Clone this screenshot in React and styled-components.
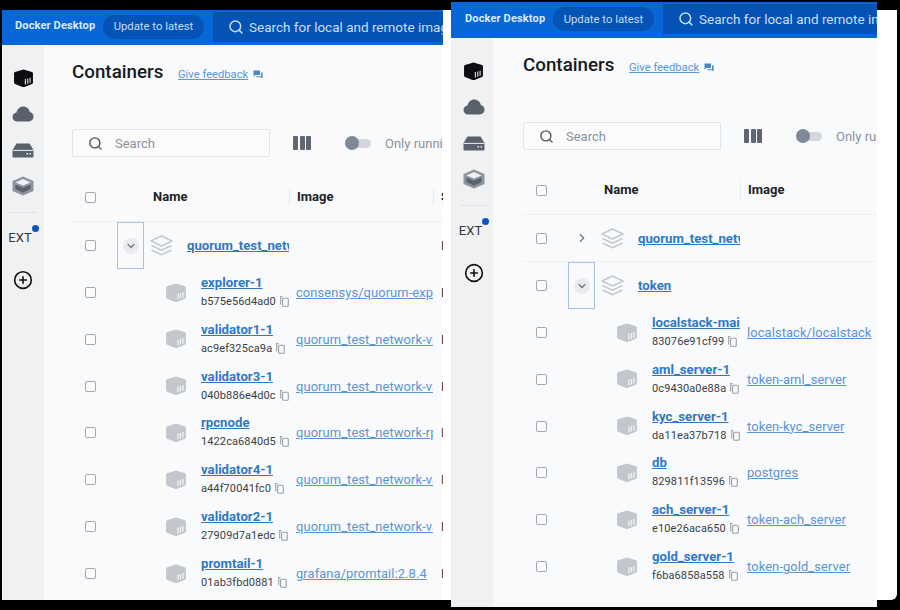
import React from 'react';
import styled, { createGlobalStyle } from 'styled-components';
import { Search, CirclePlus, ChevronDown, ChevronRight } from 'lucide-react';

const GlobalStyle = createGlobalStyle`
  html, body { margin: 0; padding: 0; background: #000; }
  body { font-family: Roboto, "Liberation Sans", sans-serif; }
`;

const Page = styled.div`
  width: 900px;
  height: 610px;
  padding: 10px 3px 10px 2px;
  box-sizing: border-box;
  background: #000;
  overflow: hidden;
`;

const Sheet = styled.div`
  display: flex;
  height: 590px;
  gap: 8px;
  padding-right: 20px;
  background: #fff;
  border-radius: 3px 0 6px 5px;
`;

const Win = styled.div`
  display: flex;
  flex-direction: column;
  width: ${p => p.$width}px;
  flex: none;
  height: ${p => p.$height}px;
  margin-top: ${p => p.$top}px;
  overflow: hidden;
  background: #f9fafb;
`;

const TopBar = styled.div`
  display: flex;
  align-items: center;
  flex: none;
  height: ${p => p.$height}px;
  box-sizing: border-box;
  padding: 0 0 2px ${p => p.$inset}px;
  background: #0767d6;
  color: #fff;
`;

const Brand = styled.div`
  width: 88px;
  flex: none;
  margin-top: -2px;
  font-size: 11px;
  font-weight: 700;
  color: #d9ebfb;
  letter-spacing: 0.15px;
`;

const UpdatePill = styled.div`
  width: 101px;
  height: 24px;
  flex: none;
  display: flex;
  align-items: center;
  justify-content: center;
  border-radius: 12px;
  background: #0553b6;
  color: #c4dcf5;
  font-size: 11.3px;
`;

const GlobalSearch = styled.div`
  display: flex;
  align-items: center;
  gap: 5px;
  flex: none;
  width: 300px;
  height: 30px;
  margin-left: 9px;
  padding-left: 15px;
  background: #0452b4;
  color: #c9dff6;
  font-size: 13.5px;
  white-space: nowrap;
`;

const Body = styled.div`
  display: flex;
  flex: 1;
  min-height: 0;
`;

const Sidebar = styled.div`
  width: 42px;
  flex: none;
  box-sizing: border-box;
  display: flex;
  flex-direction: column;
  align-items: center;
  padding-top: 15px;
  padding-left: ${p => p.$shift}px;
  background: #f0f1f3;
`;

const SideIcon = styled.div`
  height: 36px;
  display: flex;
  align-items: center;
  justify-content: center;
`;

const SideRule = styled.div`
  width: 28px;
  height: 1px;
  margin-top: 8px;
  background: #e0e2e5;
`;

const Ext = styled.div`
  position: relative;
  margin: 17px 0 0 -6px;
  font-size: 13px;
  color: #33373c;
  line-height: 16px;
`;

const ExtDot = styled.span`
  position: absolute;
  top: -5px;
  right: -7px;
  width: 7px;
  height: 7px;
  border-radius: 50%;
  background: #0b55b8;
`;

const PlusWrap = styled.div`
  margin-top: 24px;
  height: 20px;
  color: #111;
`;

const Main = styled.div`
  flex: 1;
  min-width: 0;
  overflow: hidden;
  padding: 15px 0 0 ${p => p.$inset}px;
`;

const TitleRow = styled.div`
  display: flex;
  align-items: center;
  height: 24px;
`;

const Title = styled.div`
  font-size: 18.8px;
  font-weight: 500;
  color: #17191c;
  width: 106px;
  flex: none;
`;

const Feedback = styled.a`
  display: flex;
  align-items: center;
  gap: 5px;
  font-size: 11.2px;
  color: #5b96d6;
  margin-top: 4px;
  span { text-decoration: underline; }
`;

const Toolbar = styled.div`
  display: flex;
  align-items: center;
  height: 28px;
  margin-top: 45px;
  width: 500px;
`;

const SearchBox = styled.div`
  display: flex;
  align-items: center;
  gap: 12px;
  width: 198px;
  height: 28px;
  flex: none;
  box-sizing: border-box;
  padding-left: 15px;
  border: 1px solid #e3e6ea;
  border-radius: 2px;
  background: #fbfbfc;
  color: #8b929b;
  font-size: 13px;
`;

const ColumnBars = styled.div`
  display: flex;
  gap: 1.5px;
  margin-left: 23px;
  width: 18px;
  height: 14px;
  flex: none;
  i { flex: 1; background: #5f6771; border-radius: 1px; }
`;

const Toggle = styled.div`
  position: relative;
  width: 26px;
  height: 9px;
  margin-left: 34px;
  flex: none;
  border-radius: 5px;
  background: #d3d7dd;
  &::before {
    content: '';
    position: absolute;
    left: 0;
    top: -2.5px;
    width: 14px;
    height: 14px;
    border-radius: 50%;
    background: #7f8896;
  }
`;

const ToggleLabel = styled.div`
  margin-left: 14px;
  font-size: 13px;
  color: #8b929b;
  white-space: nowrap;
`;

const Table = styled.div`
  margin-top: 17px;
`;

const Row = styled.div`
  display: grid;
  grid-template-columns: 45px 172px 144px minmax(0, 1fr);
  align-items: center;
  height: ${p => (p.$head ? 48 : p.$child ? 46.85 : 47)}px;
  box-sizing: ${p => (p.$line ? 'border-box' : 'content-box')};
  border-bottom: ${p => (p.$line ? '1px solid #eef0f2' : 'none')};
`;

const Box = styled.span`
  display: block;
  width: 11px;
  height: 11px;
  margin-left: 13px;
  box-sizing: border-box;
  border: 1.5px solid #a3a8af;
  border-radius: 2px;
  background: #fcfcfd;
`;

const HeadCell = styled.div`
  height: 16px;
  margin-bottom: 2px;
  display: flex;
  align-items: center;
  font-size: 13px;
  font-weight: 700;
  color: #202226;
  padding-left: ${p => (p.$first ? 36 : 7)}px;
  border-left: ${p => (p.$first ? 'none' : '1px solid #e8eaed')};
  box-sizing: border-box;
  white-space: nowrap;
  overflow: hidden;
`;

const NameCell = styled.div`
  display: flex;
  align-items: center;
  height: 100%;
  overflow: hidden;
  padding-left: ${p => (p.$child ? 48 : 0)}px;
`;

const Chevron = styled.div`
  width: 27px;
  height: 47px;
  flex: none;
  display: flex;
  align-items: center;
  justify-content: center;
  box-sizing: border-box;
  margin-right: 6px;
  border: 1px solid ${p => (p.$open ? '#a5c3e4' : 'transparent')};
  color: #6f7680;
`;

const ChevronDisc = styled.span`
  display: flex;
  align-items: center;
  justify-content: center;
  width: 16px;
  height: 16px;
  border-radius: 50%;
  background: #e9ebee;
`;

const GroupName = styled.a`
  margin-left: 14px;
  font-size: 13.2px;
  font-weight: 700;
  color: #2f78c4;
  text-decoration: underline;
  white-space: nowrap;
`;

const ChildText = styled.div`
  margin: 0 0 2px 14px;
  white-space: nowrap;
`;

const ChildName = styled.a`
  display: block;
  font-size: 13.2px;
  font-weight: 700;
  line-height: 17px;
  color: #2f78c4;
  text-decoration: underline;
`;

const IdLine = styled.div`
  display: flex;
  align-items: center;
  gap: 4px;
  margin-top: 3px;
  font-size: 11px;
  line-height: 15px;
  letter-spacing: 0.1px;
  color: #3a3e44;
`;

const ImageCell = styled.a`
  padding-left: 7px;
  font-size: 12.9px;
  color: #5a94d4;
  text-decoration: underline;
  white-space: nowrap;
  overflow: hidden;
  letter-spacing: 0.1px;
`;

const StatusCell = styled.div`
  padding-left: 8px;
  font-size: 12.5px;
  color: #33373c;
  white-space: nowrap;
  overflow: hidden;
`;

const CubeIcon = ({ size = 22, color = '#c3c7cd', stripe = '#f4f5f6' }) => (
  <svg width={size} height={size * 0.9} viewBox="0 0 22 20" style={{ flex: 'none' }}>
    <path d="M11 0.5 20 3.2Q21 3.6 21 4.6v10Q21 15.6 20 16L11 19.5 2 16Q1 15.6 1 14.6v-10Q1 3.6 2 3.2z" fill={color} />
    <path d="M13 10.5v6M15.5 10v5.6M18 9.2v5.4" stroke={stripe} strokeWidth="1.3" />
  </svg>
);

const CloudIcon = () => (
  <svg width="22" height="16" viewBox="0 0 22 16">
    <path d="M5.5 15.5C2.5 15.5.5 13.5.5 11c0-2.4 1.8-4.2 4-4.4C5.3 3 8 .6 11.2.6c3.4 0 6 2.3 6.6 5.5 2.1.3 3.7 2.2 3.7 4.5 0 2.7-2 4.9-4.8 4.9z" fill="#59616d" />
  </svg>
);

const DriveIcon = () => (
  <svg width="22" height="15" viewBox="0 0 22 15">
    <path d="M4.5 0.5h13L21.5 7v6.5a1 1 0 0 1-1 1h-19a1 1 0 0 1-1-1V7z" fill="#59616d" />
    <path d="M0.8 7.4h20.4" stroke="#f0f1f3" strokeWidth="1" />
    <path d="M14.5 10.8h1.6M17.6 10.8h1.4" stroke="#f0f1f3" strokeWidth="1.6" />
  </svg>
);

const ExtensionsIcon = () => (
  <svg width="22" height="20" viewBox="0 0 22 20">
    <path d="M11 .5 21.5 5v10L11 19.5.5 15V5z" fill="#8d95a0" />
    <path d="M11 3 18.5 6.4 11 9.6 3.5 6.4z" fill="#f0f1f3" />
    <path d="M3.5 8.5 11 11.8l7.5-3.3V13L11 16.8 3.5 13z" fill="#59616d" />
  </svg>
);

const StackIcon = () => (
  <svg width="23" height="21" viewBox="0 0 23 21" fill="none" stroke="#c6cad0" strokeWidth="1.6" strokeLinejoin="round" style={{ flex: 'none' }}>
    <path d="M11.5 1 22 6l-10.5 5L1 6z" />
    <path d="M1.5 10.5l10 4.7 10-4.7" />
    <path d="M1.5 15l10 4.7 10-4.7" />
  </svg>
);

const CopyIcon = () => (
  <svg width="9" height="11" viewBox="0 0 9 11" fill="none" stroke="#9a9fa6" strokeWidth="1.1" style={{ flex: 'none' }}>
    <path d="M2.5 .6H.7v8" />
    <rect x="2.6" y="2.2" width="5.7" height="8" rx="1" />
  </svg>
);

const FeedbackIcon = () => (
  <svg width="10" height="9" viewBox="0 0 10 9" style={{ flex: 'none' }}>
    <path d="M.5.5h6.5v4.6H2.4L.5 6.6z" fill="#4b86c8" />
    <path d="M8 2.5h1.6v6L8 7.2H3.4V6.2H8z" fill="#4b86c8" />
  </svg>
);

const Child = ({ item, status }) => (
  <Row $child>
    <Box />
    <NameCell $child>
      <CubeIcon />
      <ChildText>
        <ChildName>{item.name}</ChildName>
        <IdLine>
          {item.id}
          <CopyIcon />
        </IdLine>
      </ChildText>
    </NameCell>
    <ImageCell>{item.image}</ImageCell>
    {status && <StatusCell>Exited</StatusCell>}
  </Row>
);

const Group = ({ name, open, line, status }) => (
  <Row $line={line}>
    <Box />
    <NameCell>
      <Chevron $open={open}>
        {open ? (
          <ChevronDisc><ChevronDown size={12} strokeWidth={2.4} /></ChevronDisc>
        ) : (
          <ChevronRight size={14} strokeWidth={2} />
        )}
      </Chevron>
      <StackIcon />
      <GroupName>{name}</GroupName>
    </NameCell>
    <span />
    {status && <StatusCell>Exited</StatusCell>}
  </Row>
);

const Window = ({ width, height, top, barHeight, barInset, sideShift, inset, status, children }) => (
  <Win $width={width} $height={height} $top={top}>
    <TopBar $height={barHeight} $inset={barInset}>
      <Brand>Docker Desktop</Brand>
      <UpdatePill>Update to latest</UpdatePill>
      <GlobalSearch>
        <Search size={16} strokeWidth={2.2} />
        Search for local and remote images
      </GlobalSearch>
    </TopBar>
    <Body>
      <Sidebar $shift={sideShift}>
        <SideIcon><CubeIcon size={21} color="#0c0d10" stripe="#c8ccd2" /></SideIcon>
        <SideIcon><CloudIcon /></SideIcon>
        <SideIcon><DriveIcon /></SideIcon>
        <SideIcon><ExtensionsIcon /></SideIcon>
        <SideRule />
        <Ext>EXT<ExtDot /></Ext>
        <PlusWrap><CirclePlus size={20} strokeWidth={1.9} /></PlusWrap>
      </Sidebar>
      <Main $inset={inset}>
        <TitleRow>
          <Title>Containers</Title>
          <Feedback>
            <span>Give feedback</span>
            <FeedbackIcon />
          </Feedback>
        </TitleRow>
        <Toolbar>
          <SearchBox>
            <Search size={15} color="#4f555d" strokeWidth={2.2} />
            Search
          </SearchBox>
          <ColumnBars><i /><i /><i /></ColumnBars>
          <Toggle />
          <ToggleLabel>Only running</ToggleLabel>
        </Toolbar>
        <Table>
          <Row $head $line>
            <Box />
            <HeadCell $first>Name</HeadCell>
            <HeadCell>Image</HeadCell>
            {status && <HeadCell>Status</HeadCell>}
          </Row>
          {children}
        </Table>
      </Main>
    </Body>
  </Win>
);

const quorum = [
  { name: 'explorer-1', id: 'b575e56d4ad0', image: 'consensys/quorum-exp' },
  { name: 'validator1-1', id: 'ac9ef325ca9a', image: 'quorum_test_network-va' },
  { name: 'validator3-1', id: '040b886e4d0c', image: 'quorum_test_network-va' },
  { name: 'rpcnode', id: '1422ca6840d5', image: 'quorum_test_network-rp' },
  { name: 'validator4-1', id: 'a44f70041fc0', image: 'quorum_test_network-va' },
  { name: 'validator2-1', id: '27909d7a1edc', image: 'quorum_test_network-va' },
  { name: 'promtail-1', id: '01ab3fbd0881', image: 'grafana/promtail:2.8.4' },
];

const token = [
  { name: 'localstack-main', id: '83076e91cf99', image: 'localstack/localstack' },
  { name: 'aml_server-1', id: '0c9430a0e88a', image: 'token-aml_server' },
  { name: 'kyc_server-1', id: 'da11ea37b718', image: 'token-kyc_server' },
  { name: 'db', id: '829811f13596', image: 'postgres' },
  { name: 'ach_server-1', id: 'e10e26aca650', image: 'token-ach_server' },
  { name: 'gold_server-1', id: 'f6ba6858a558', image: 'token-gold_server' },
];

export default function App() {
  return (
    <Page>
      <GlobalStyle />
      <Sheet>
        <Window width={441} height={590} top={0} barHeight={35} barInset={13} sideShift={0} inset={28} status>
          <Group name="quorum_test_network" open status />
          {quorum.map(item => <Child key={item.id} item={item} status />)}
        </Window>
        <Window width={426} height={605} top={-8} barHeight={36} barInset={14} sideShift={3} inset={30}>
          <Group name="quorum_test_network" line />
          <Group name="token" open />
          {token.map(item => <Child key={item.id} item={item} />)}
        </Window>
      </Sheet>
    </Page>
  );
}
